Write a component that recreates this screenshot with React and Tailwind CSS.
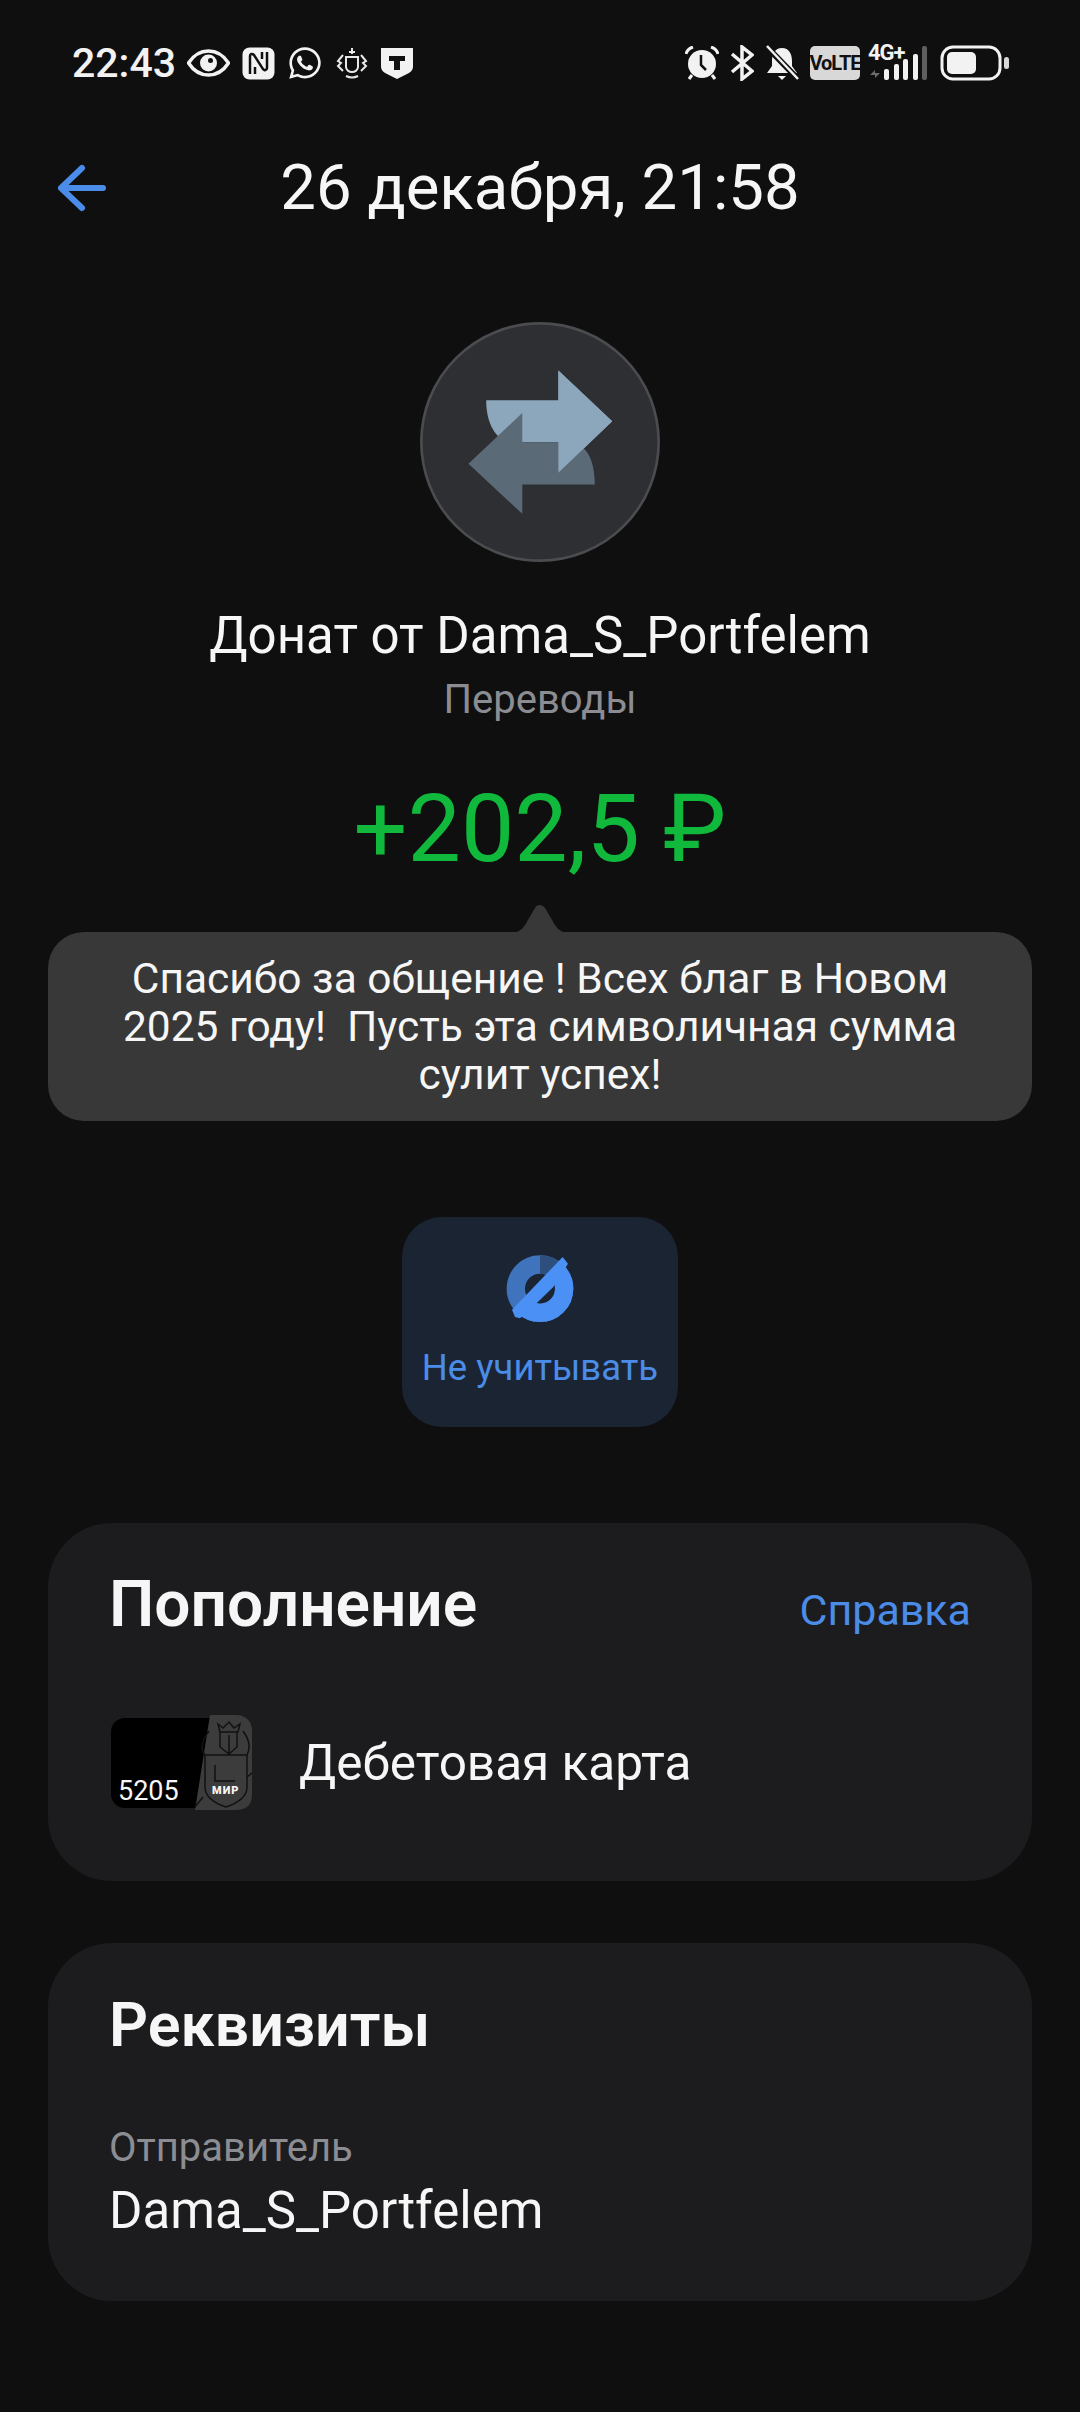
import React from "react";
import { FaWhatsapp } from "react-icons/fa";

const Eye = () => (
  <svg width="43" height="28" viewBox="0 0 43 28">
    <path d="M1.500 14C7 5.500 14 2 21.500 2S36 5.500 41.500 14C36 22.500 29 26 21.500 26S7 22.500 1.500 14Z" fill="none" stroke="#f2f2f2" strokeWidth="3.500" />
    <circle cx="21.500" cy="14" r="8.500" fill="#f2f2f2" />
    <circle cx="23.500" cy="11.500" r="2.500" fill="#111" />
  </svg>
);

const Nfc = () => (
  <svg width="33" height="33" viewBox="0 0 33 33">
    <rect x="0.500" y="0.500" width="32" height="32" rx="7" fill="#f2f2f2" />
    <path d="M8 27V9c0-2 2-3 4-1l9 14c1 2 4 1 4-1V5" fill="none" stroke="#111" strokeWidth="2.500" />
    <path d="M13 20v7M20 5v7" fill="none" stroke="#111" strokeWidth="2.500" />
  </svg>
);

const Crest = () => (
  <svg width="34" height="32" viewBox="0 0 34 32" fill="none" stroke="#e8e8e8" strokeWidth="2">
    <path d="M14 5h6M17 1v6M11 10h12v10c0 3-3 5-6 5s-6-2-6-5z" />
    <path d="M8 8 3 14l3 2-3 3 5 5M26 8l5 6-3 2 3 3-5 5M11 29c4 2 8 2 12 0" />
  </svg>
);

const TShield = () => (
  <svg width="32" height="32" viewBox="0 0 32 32">
    <path d="M0 1h32v18c0 4-2 6-6 8l-10 5-10-5c-4-2-6-4-6-8z" fill="#f2f2f2" />
    <path d="M8 9h16v5h-5v9h-6v-9H8z" fill="#111" />
  </svg>
);

const Alarm = () => (
  <svg width="34" height="34" viewBox="0 0 34 34">
    <circle cx="17" cy="18" r="14" fill="#f2f2f2" />
    <path d="M16 9v10l5 5" fill="none" stroke="#111" strokeWidth="2.500" />
    <path d="M1 8c1-4 4-6 7-7M33 8c-1-4-4-6-7-7" fill="none" stroke="#f2f2f2" strokeWidth="3" />
    <path d="M7 29l-3 4M27 29l3 4" stroke="#f2f2f2" strokeWidth="3" />
  </svg>
);

const Bluetooth = () => (
  <svg width="24" height="36" viewBox="0 0 24 36" fill="none" stroke="#f2f2f2" strokeWidth="3.500">
    <path d="M2 9l20 17-10 8V2l10 8L2 27" />
  </svg>
);

const BellOff = () => (
  <svg width="34" height="36" viewBox="0 0 34 36">
    <path d="M17 3c-7 0-10 6-10 13v5l-5 7h30l-5-7v-5C27 9 24 3 17 3Z" fill="#f2f2f2" />
    <path d="M13 31h8l-4 4z" fill="#f2f2f2" />
    <path d="M1 1l32 33" stroke="#111" strokeWidth="6" />
    <path d="M2 1l31 33" stroke="#f2f2f2" strokeWidth="2.500" />
  </svg>
);

const Signal = () => (
  <svg width="60" height="36" viewBox="0 0 60 36">
    <path d="M2 30l5-5v5zM12 28l-5 5v-5z" fill="#6b6b6b" />
    <rect x="16" y="24" width="5" height="11" rx="2" fill="#f2f2f2" />
    <rect x="26" y="19" width="5" height="16" rx="2" fill="#f2f2f2" />
    <rect x="35" y="14" width="5" height="21" rx="2" fill="#f2f2f2" />
    <rect x="45" y="9" width="5" height="26" rx="2" fill="#f2f2f2" />
    <rect x="54" y="1" width="5" height="34" rx="2" fill="#5f5f5f" />
  </svg>
);

const Battery = () => (
  <svg width="70" height="36" viewBox="0 0 70 36">
    <rect x="2" y="2" width="58" height="32" rx="11" fill="none" stroke="#f2f2f2" strokeWidth="3" />
    <rect x="7" y="7" width="29" height="22" rx="5" fill="#f2f2f2" />
    <rect x="64" y="12" width="5" height="12" rx="2.500" fill="#d8d8d8" />
  </svg>
);

const BackArrow = () => (
  <svg width="50" height="50" viewBox="0 0 50 50" fill="none" stroke="#4a8ce8" strokeWidth="6" strokeLinecap="round" strokeLinejoin="round">
    <path d="M25 5L4 25L25 45M4 25H46" />
  </svg>
);

const TransferIcon = () => (
  <svg width="240" height="240" viewBox="60 33 718 718">
    <circle cx="419" cy="392" r="355" fill="#2e2f33" stroke="#4b4c4f" strokeWidth="8" />
    <path d="M258 267H474V178L635 330L474 484V393H340C290 393 258 340 258 267Z" fill="#8ca6bb" />
    <path d="M366 305L205 457L366 607V519H583C583 440 555 393 500 393H366Z" fill="#5b6a77" />
    <path d="M474 178L635 330L474 484Z" fill="#8ca6bb" />
  </svg>
);

const IgnoreIcon = () => (
  <svg width="70" height="70" viewBox="375 160 210 210">
    <defs>
      <clipPath id="lowerHalf">
        <path d="M330 400L630 100V400H330Z" />
      </clipPath>
    </defs>
    <circle cx="480" cy="267" r="72.500" fill="none" stroke="#3f74bc" strokeWidth="55" />
    <path d="M480 167A100 100 0 0 1 550 196L512 234A45 45 0 0 0 480 222Z" fill="#2e4f7e" />
    <circle cx="480" cy="267" r="72.500" fill="none" stroke="#4a90f5" strokeWidth="55" clipPath="url(#lowerHalf)" />
    <path d="M548 172L564 192L520 262L465 315L420 356L405 352L396 330Z" fill="#4a90f5" />
  </svg>
);

const CardArt = () => (
  <svg width="141" height="95" viewBox="0 0 141 95" className="block">
    <rect x="0" y="3" width="141" height="90" rx="14" fill="#000" />
    <path d="M99 0H125C135 0 141 7 141 15V80C141 90 135 95 125 95H84Z" fill="#3c3c3c" />
    <g fill="none" stroke="#111" strokeWidth="1.500">
      <path d="M107 9l5 4 6-6 5 6 6-4-2 8h-18zM109 17v15l9 7 8-7V17M94 40h42v32c0 10-9 16-21 20-12-4-21-10-21-20zM118 20v18M104 50v16h20" />
      <path d="M94 40c-6-6-2-16 4-24M136 40c4-8 2-16-4-24M84 92l8-10M136 62l5-4" />
    </g>
  </svg>
);

const App = () => {
  return (
    <div className="w-[1080px] h-[2412px] overflow-hidden bg-[#0f0f10] text-white font-['Roboto',sans-serif] flex flex-col">
      {/* status bar */}
      <div className="h-[62px] mt-[32px] pl-[72px] pr-[70px] flex items-center justify-between shrink-0">
        <div className="flex items-center">
          <span className="text-[41px] leading-none font-medium text-[#f2f2f2] w-[105px] whitespace-nowrap">22:43</span>
          <div className="flex items-center gap-[12px] ml-[10px]">
            <Eye />
            <Nfc />
            <FaWhatsapp size={36} color="#f2f2f2" />
            <Crest />
            <TShield />
          </div>
        </div>
        <div className="flex items-center">
          <Alarm />
          <div className="ml-[11px]"><Bluetooth /></div>
          <div className="ml-[11px]"><BellOff /></div>
          <div className="ml-[11px] w-[50px] h-[34px] rounded-[5px] bg-[#d8d8d8] flex items-center justify-center text-[#111] text-[20px] font-bold tracking-[-1px] leading-none">VoLTE</div>
          <div className="relative ml-[8px] w-[60px] h-[36px]">
            <Signal />
            <span className="absolute left-0 top-[-3px] text-[22px] font-bold leading-none tracking-[-1px] text-[#f2f2f2]">4G+</span>
          </div>
          <div className="ml-[12px]"><Battery /></div>
        </div>
      </div>

      {/* header */}
      <div className="h-[72px] mt-[58px] pl-[57px] flex items-center relative shrink-0">
        <BackArrow />
        <h1 className="absolute left-0 right-0 text-center text-[63.500px] leading-none font-normal text-[#f6f6f6]">26 декабря, 21:58</h1>
      </div>

      {/* operation */}
      <div className="flex flex-col items-center mt-[98px] shrink-0">
        <TransferIcon />
        <div className="mt-[44px] text-[51px] leading-[60px] text-[#f6f6f6] whitespace-nowrap">Донат от Dama_S_Portfelem</div>
        <div className="mt-[11px] text-[40px] leading-[46px] text-[#8b8d92]">Переводы</div>
        <div className="mt-[56px] text-[95px] leading-[100px] font-[450] text-[#10b93c]">+202,5 ₽</div>
      </div>

      {/* comment bubble */}
      <div className="relative mx-[48px] mt-[53px] rounded-[36px] bg-[#383838] h-[189px] px-[40px] flex items-center justify-center text-center text-[42.500px] leading-[48px] text-[#f6f6f6] shrink-0">
        <svg width="62" height="28" viewBox="0 0 62 28" className="absolute top-[-27px] left-[461px]">
          <path d="M0 28C8 28 12 26 16 20L26 3C28-1 33-1 36 3L46 20C50 26 54 28 62 28Z" fill="#383838" />
        </svg>
        <p className="whitespace-pre">{"Спасибо за общение ! Всех благ в Новом\n2025 году!  Пусть эта символичная сумма\nсулит успех!"}</p>
      </div>

      {/* action */}
      <div className="self-center mt-[96px] w-[276px] h-[210px] rounded-[40px] bg-[#1b2433] flex flex-col items-center shrink-0">
        <div className="mt-[36px]"><IgnoreIcon /></div>
        <span className="mt-[23px] text-[36.500px] leading-[44px] text-[#4a8ce8] whitespace-nowrap">Не учитывать</span>
      </div>

      {/* top up card */}
      <div className="mx-[48px] mt-[96px] h-[358px] rounded-[64px] bg-[#1c1c1f] pl-[61px] pr-[61px] pt-[50px] shrink-0">
        <div className="flex items-center justify-between">
          <h2 className="text-[64px] leading-[64px] font-semibold text-[#f6f6f6]">Пополнение</h2>
          <a className="text-[43px] leading-[52px] mt-[10px] text-[#4a8ce8]">Справка</a>
        </div>
        <div className="flex items-center mt-[78px]">
          <div className="relative w-[141px] h-[95px] ml-[2px]">
            <CardArt />
            <span className="absolute left-[7px] bottom-[3px] text-[27px] leading-[32px] text-[#f6f6f6]">5205</span>
            <span className="absolute left-[101px] bottom-[14px] text-[11px] leading-none font-black tracking-[1px] text-[#f6f6f6]">МИР</span>
          </div>
          <span className="ml-[47px] text-[49.500px] leading-[56px] text-[#f6f6f6]">Дебетовая карта</span>
        </div>
      </div>

      {/* details card */}
      <div className="mx-[48px] mt-[62px] h-[358px] rounded-[64px] bg-[#1c1c1f] px-[61px] pt-[50px] shrink-0">
        <h2 className="text-[61px] leading-[64px] font-semibold text-[#f6f6f6]">Реквизиты</h2>
        <div className="mt-[68px] text-[40px] leading-[46px] text-[#8b8d92]">Отправитель</div>
        <div className="mt-[10px] text-[51px] leading-[60px] text-[#f6f6f6]">Dama_S_Portfelem</div>
      </div>
    </div>
  );
};

export default App;
